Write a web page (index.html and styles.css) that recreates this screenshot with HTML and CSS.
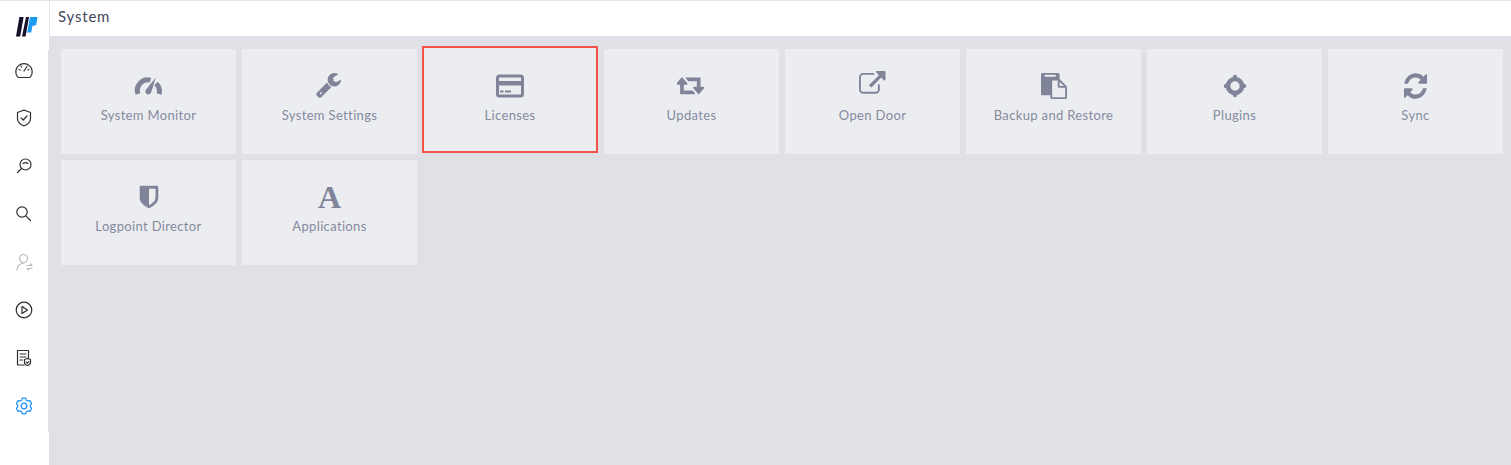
FILE: index.html
```html
<!DOCTYPE html>
<html lang="en">
<head>
  <meta charset="UTF-8" />
  <title>System</title>
  <link rel="stylesheet" href="styles.css">
</head>
<body>
  <div class="app">
    <aside class="sidebar">
      <div class="logo">
        <svg width="22" height="20" viewBox="0 0 22 20">
          <polygon points="3.400,0 7.600,0 4.200,19.500 0,19.500" fill="#15102b"/>
          <polygon points="10,0 13,0 9.600,19.500 6,19.500" fill="#15102b"/>
          <polygon points="14,0 21.500,0 20.200,8 16.400,9 15.200,15.500 11.200,15.500" fill="#1d9bf0"/>
        </svg>
      </div>
      <nav class="side-nav">
        <a href="#"><svg viewBox="0 0 20 20"><path d="M5 17.500h10c.8 0 1.300-.4 1.700-1A8.200 8.200 0 1 0 3.300 16.500c.4.600.9 1 1.700 1z"/><path d="M10 11l3-4.500M5 9.500l1 .5M7 6l.6 1M15 9.500l-1 .5"/></svg></a>
        <a href="#"><svg viewBox="0 0 20 20"><path d="M10 2l6.500 2.500v6c0 3.800-3.400 6.300-6.500 7.500-3.100-1.200-6.500-3.700-6.500-7.500v-6z"/><path d="M7 9.800l2.200 2.200 3.800-4"/></svg></a>
        <a href="#"><svg viewBox="0 0 20 20"><circle cx="11.500" cy="8.500" r="5.500"/><path d="M7.600 12.400L3.500 16.500M9 7.500c1.500-1 3.500-1 5 0"/></svg></a>
        <a href="#"><svg viewBox="0 0 20 20"><circle cx="8" cy="8" r="5.200"/><path d="M11.800 11.800l4.700 4.700"/></svg></a>
        <a href="#" class="is-disabled"><svg viewBox="0 0 20 20"><circle cx="9.500" cy="6.500" r="4"/><path d="M3 18c0-3.800 2.800-6.300 6.500-7M13 13.500h5l-1.500-1.500M18 16.500h-5l1.500 1.500"/></svg></a>
        <a href="#"><svg viewBox="0 0 20 20"><circle cx="10" cy="10" r="7.800"/><path d="M8 6.500l5.500 3.500L8 13.500z"/></svg></a>
        <a href="#"><svg viewBox="0 0 20 20"><path d="M10 17H3.500V2.500h11v8"/><path d="M6 6h6M6 9h6M6 12h2.500"/><path d="M13.500 10.500l3 1v3c0 1.500-1.500 2.500-3 3-1.500-.5-3-1.500-3-3v-3z"/><path d="M12.300 14.200l1 1 1.500-1.600"/></svg></a>
        <a href="#" class="is-active"><svg viewBox="0 0 20 20"><path d="M8.340 2.180H11.660L12.360 4.160 13.880 5.040 15.940 4.650 17.610 7.530 16.240 9.120V10.880L17.610 12.470 15.940 15.350 13.880 14.960 12.360 15.840 11.660 17.820H8.340L7.640 15.840 6.120 14.960 4.060 15.350 2.390 12.470 3.760 10.880V9.120L2.390 7.530 4.060 4.650 6.120 5.040 7.640 4.160z"/><circle cx="10" cy="10" r="2.800"/></svg></a>
      </nav>
      <div class="side-foot"></div>
    </aside>

    <div class="main">
      <header class="topbar">System</header>
      <section class="grid">
        <a class="card" href="#">
          <span class="card-icon"><svg width="32" height="32" viewBox="0 0 32 32"><path class="gauge" d="M5 24A10.500 10.500 0 0 1 17.500 10.200M23 13.500A10.500 10.500 0 0 1 26 24"/><path d="M22.800 7.500L18.300 22a3 3 0 1 1-5.600-2z"/></svg></span>
          <span class="card-label">System Monitor</span>
        </a>
        <a class="card" href="#">
          <span class="card-icon"><svg width="27" height="27" viewBox="0 0 1792 1792"><path d="M384 1344q0-26-19-45t-45-19-45 19-19 45 19 45 45 19 45-19 19-45zm644-420l-682 682q-37 37-90 37-52 0-91-37l-106-108q-38-36-38-90 0-53 38-91l681-681q39 98 114.500 173.500t173.500 114.500zm634-435q0 39-23 106-47 134-164.500 217.500t-258.500 83.500q-185 0-316.500-131.500t-131.500-316.500 131.500-316.500 316.500-131.500q58 0 121.500 16.500t107.500 46.500q16 11 16 28t-16 28l-293 169v224l193 107q5-3 79-48.500t135.500-81 70.500-35.500q15 0 23.500 10t8.500 25z"/></svg></span>
          <span class="card-label">System Settings</span>
        </a>
        <a class="card card-marked" href="#">
          <span class="card-icon"><svg width="28" height="24" viewBox="0 0 28 24"><rect class="cc-body" x="1.500" y="2" width="25" height="20" rx="2"/><rect x="2" y="7" width="24" height="4.500"/><rect x="4" y="16.500" width="3.500" height="2"/><rect x="9" y="16.500" width="6" height="2"/></svg></span>
          <span class="card-label">Licenses</span>
        </a>
        <a class="card" href="#">
          <span class="card-icon"><svg width="28.500" height="26" viewBox="0 0 1920 1792"><path d="M1216 1424q0 13-9.500 22.500t-22.500 9.500h-960q-8 0-13.500-2t-9-7-5.500-8-3-11.500-1-11.500v-600h-192q-26 0-45-19t-19-45q0-24 15-41l320-384q19-22 49-22t49 22l320 384q15 17 15 41 0 26-19 45t-45 19h-192v384h576q16 0 25 11l160 192q7 10 7 21zm640-416q0 24-15 41l-320 384q-20 23-49 23t-49-23l-320-384q-15-17-15-41 0-26 19-45t45-19h192v-384h-576q-16 0-25-12l-160-192q-7-9-7-20 0-13 9.500-22.500t22.500-9.500h960q8 0 13.500 2t9 7 5.500 8 3 11.500 1 11.500v600h192q26 0 45 19t19 45z"/></svg></span>
          <span class="card-label">Updates</span>
        </a>
        <a class="card" href="#">
          <span class="card-icon icon-raised"><svg width="26.500" height="26.500" viewBox="0 0 1792 1792"><path d="M1408 928v320q0 119-84.500 203.500t-203.500 84.500h-832q-119 0-203.500-84.500t-84.500-203.500v-832q0-119 84.500-203.500t203.500-84.500h704q14 0 23 9t9 23v64q0 14-9 23t-23 9h-704q-66 0-113 47t-47 113v832q0 66 47 113t113 47h832q66 0 113-47t47-113v-320q0-14 9-23t23-9h64q14 0 23 9t9 23zm384-864v512q0 26-19 45t-45 19-45-19l-176-176-652 652q-10 10-23 10t-23-10l-114-114q-10-10-10-23t10-23l652-652-176-176q-19-19-19-45t19-45 45-19h512q26 0 45 19t19 45z"/></svg></span>
          <span class="card-label">Open Door</span>
        </a>
        <a class="card" href="#">
          <span class="card-icon"><svg width="26" height="26" viewBox="0 0 1792 1792"><path d="M768 1664h896v-640h-416q-40 0-68-28t-28-68v-416h-384v1152zm256-1440v-64q0-13-9.500-22.500t-22.500-9.500h-704q-13 0-22.500 9.500t-9.500 22.500v64q0 13 9.500 22.500t22.500 9.500h704q13 0 22.500-9.500t9.500-22.500zm256 672h299l-299-299v299zm512 128v672q0 40-28 68t-68 28h-960q-40 0-68-28t-28-68v-160h-544q-40 0-68-28t-28-68v-1344q0-40 28-68t68-28h1088q40 0 68 28t28 68v328q21 13 36 28l408 408q28 28 48 76t20 88z"/></svg></span>
          <span class="card-label">Backup and Restore</span>
        </a>
        <a class="card" href="#">
          <span class="card-icon"><svg width="32" height="32" viewBox="0 0 32 32"><circle class="ring" cx="16" cy="16" r="7"/><path class="knobs" d="M16 6.700V9M16 23V25.300M6.700 16H9M23 16H25.300"/></svg></span>
          <span class="card-label">Plugins</span>
        </a>
        <a class="card" href="#">
          <span class="card-icon"><svg width="27" height="30" viewBox="0 0 1792 1792" preserveAspectRatio="none"><path d="M1639 1056q0 5-1 7-64 268-268 434.500t-478 166.500q-146 0-282.500-55t-243.500-157l-129 129q-19 19-45 19t-45-19-19-45v-448q0-26 19-45t45-19h448q26 0 45 19t19 45-19 45l-137 137q71 66 161 102t187 36q134 0 250-65t186-179q11-17 53-117 8-23 30-23h192q13 0 22.500 9.500t9.500 22.500zm25-800v448q0 26-19 45t-45 19h-448q-26 0-45-19t-19-45 19-45l138-138q-148-137-349-137-134 0-250 65t-186 179q-11 17-53 117-8 23-30 23h-199q-13 0-22.500-9.500t-9.500-22.500v-7q65-268 270-434.500t480-166.500q146 0 284 55.500t245 156.500l130-129q19-19 45-19t45 19 19 45z"/></svg></span>
          <span class="card-label">Sync</span>
        </a>
        <a class="card" href="#">
          <span class="card-icon"><svg width="26" height="26" viewBox="0 0 1792 1792"><path d="M1344 960v-640h-448v1137q119-63 213-137 235-184 235-360zm192-768v768q0 86-33.500 170.500t-83 150-118 127.500-126.500 103-121 77.500-89.500 49.500-42.500 20q-12 6-26 6t-26-6q-16-7-42.500-20t-89.500-49.500-121-77.500-126.500-103-118-127.500-83-150-33.500-170.500v-768q0-26 19-45t45-19h1152q26 0 45 19t19 45z"/></svg></span>
          <span class="card-label">Logpoint Director</span>
        </a>
        <a class="card" href="#">
          <span class="card-icon icon-letter">A</span>
          <span class="card-label">Applications</span>
        </a>
      </section>
    </div>
  </div>
</body>
</html>
```

FILE: styles.css
```css
html, body {
  margin: 0;
  padding: 0;
  height: 100%;
  overflow: hidden;
}
body {
  font-family: 'Lato', sans-serif;
  background: #e0e1e6;
}
a {
  text-decoration: none;
  color: inherit;
}
.app {
  display: flex;
  height: 100vh;
  box-sizing: border-box;
  border-top: 1px solid #e6e6e8;
}

/* left rail */
.sidebar {
  flex: 0 0 50px;
  display: flex;
  flex-direction: column;
}
.logo {
  width: 49px;
  height: 49px;
  box-sizing: border-box;
  padding: 16px 0 0 16px;
  background: white;
}
.side-nav {
  width: 48px;
  height: 382px;
  box-sizing: border-box;
  padding-top: 10px;
  display: flex;
  flex-direction: column;
  align-items: center;
  gap: 28px;
  background: white;
}
.side-nav a {
  display: block;
  width: 20px;
  height: 20px;
  color: #2f2f33;
}
.side-nav svg {
  display: block;
  width: 20px;
  height: 20px;
  fill: none;
  stroke: currentColor;
  stroke-width: 1.2;
  stroke-linecap: round;
  stroke-linejoin: round;
}
.side-nav a.is-disabled {
  color: #b9b9bd;
}
.side-nav a.is-active {
  color: #1890ff;
}
.side-foot {
  flex: 1;
  width: 49px;
  background: white;
}

/* top bar + tiles */
.main {
  flex: 1;
  display: flex;
  flex-direction: column;
}
.topbar {
  height: 35px;
  box-sizing: border-box;
  padding: 6px 0 0 8px;
  background: white;
  font-size: 15px;
  line-height: 18px;
  letter-spacing: 0.8px;
  color: #44475a;
  margin-left: -1px;
  border-left: 1px solid #e6e6e8;
}
.grid {
  display: grid;
  grid-template-columns: repeat(8, 175px);
  grid-auto-rows: 105px;
  gap: 6px;
  padding: 13px 0 0 11px;
}
.card {
  display: flex;
  flex-direction: column;
  align-items: center;
  box-sizing: border-box;
  padding-top: 21px;
  background: #ecedf1;
  color: #7f8499;
}
.card-marked {
  margin: -3px 0 1px -1px;
  padding-top: 22px;
  border: 2px solid #f5524c;
}
.card-icon {
  display: flex;
  align-items: center;
  justify-content: center;
  width: 32px;
  height: 32px;
}
.card-icon svg {
  display: block;
  fill: currentColor;
}
.icon-raised svg {
  margin-top: -4px;
}
.icon-letter {
  font-family: 'Liberation Serif', serif;
  font-weight: 700;
  font-size: 32px;
  line-height: 32px;
}
.gauge {
  fill: none;
  stroke: currentColor;
  stroke-width: 5;
}
.cc-body {
  fill: none;
  stroke: currentColor;
  stroke-width: 3;
}
.ring {
  fill: none;
  stroke: currentColor;
  stroke-width: 4.6;
}
.knobs {
  fill: none;
  stroke: currentColor;
  stroke-width: 4;
  stroke-linecap: round;
}
.card-label {
  margin-top: 4px;
  font-size: 13px;
  line-height: 18px;
  letter-spacing: 0.35px;
  color: #858a9e;
}
```
